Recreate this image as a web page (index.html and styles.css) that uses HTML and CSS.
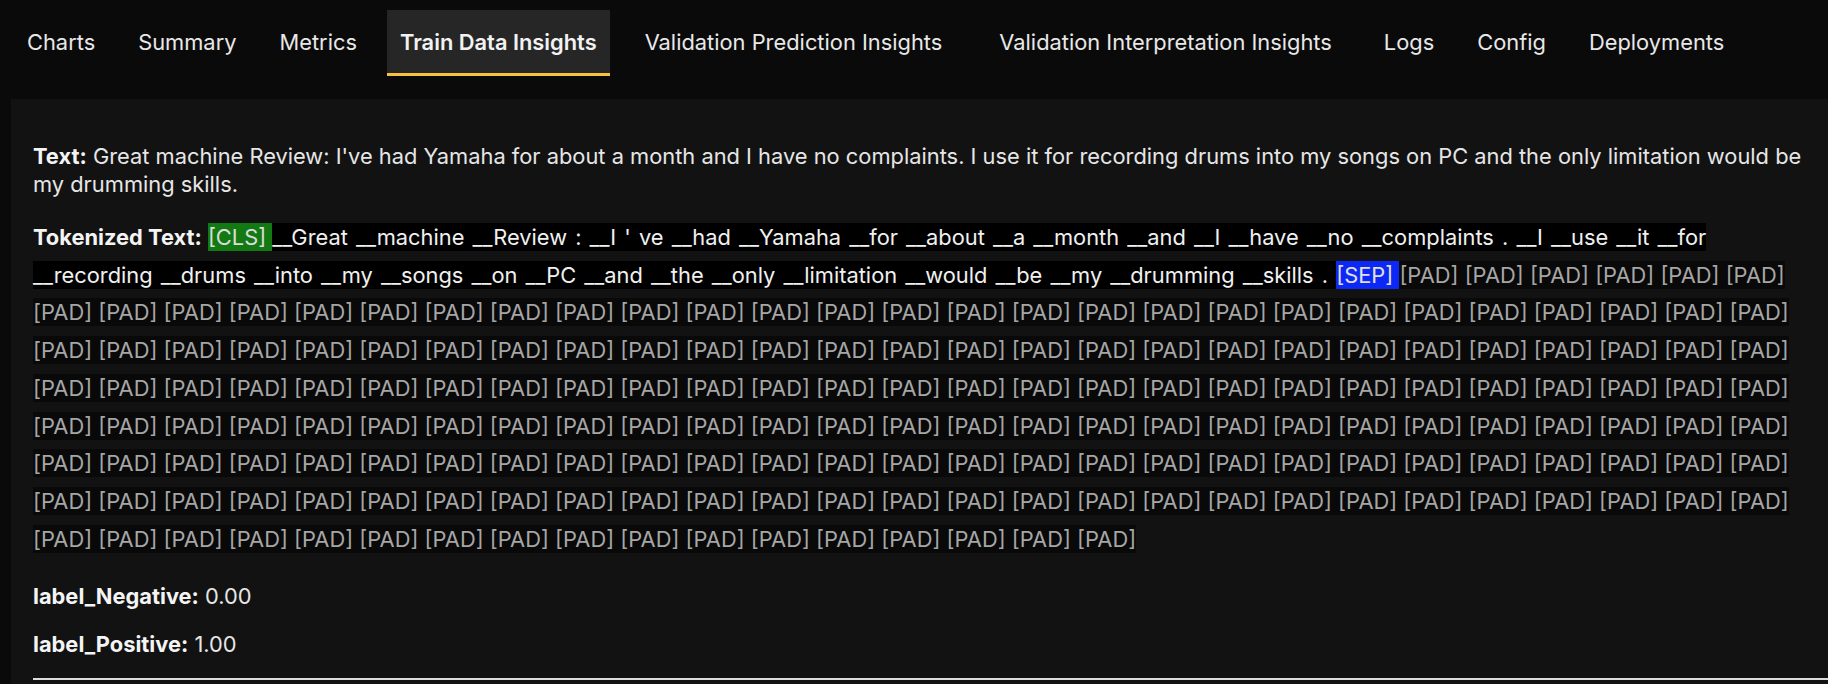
FILE: index.html
```html
<!DOCTYPE html>
<html lang="en">
<head>
<meta charset="utf-8">
<title>Train Data Insights</title>
<link rel="stylesheet" href="styles.css">
</head>
<body>
<nav class="tabs">
  <div class="tab">Charts</div>
  <div class="tab">Summary</div>
  <div class="tab">Metrics</div>
  <div class="tab active">Train Data Insights</div>
  <div class="tab tab-long">Validation Prediction Insights</div>
  <div class="tab tab-long tab-longer">Validation Interpretation Insights</div>
  <div class="tab">Logs</div>
  <div class="tab">Config</div>
  <div class="tab">Deployments</div>
</nav>
<main class="panel">
  <p class="row text-row"><b>Text:</b> Great machine Review: I've had Yamaha for about a month and I have no complaints. I use it for recording drums into my songs on PC and the only limitation would be my drumming skills.</p>
  <p class="row tokens"><b>Tokenized Text:</b> <span class="tok cls">[CLS] </span><span class="tok word">__Great __machine __Review : __I ' ve __had __Yamaha __for __about __a __month __and __I __have __no __complaints . __I __use __it __for __recording __drums __into __my __songs __on __PC __and __the __only __limitation __would __be __my __drumming __skills . </span><span class="tok sep">[SEP] </span><span class="tok pad">[PAD] [PAD] [PAD] [PAD] [PAD] [PAD] [PAD] [PAD] [PAD] [PAD]
[PAD] [PAD] [PAD] [PAD] [PAD] [PAD] [PAD] [PAD] [PAD] [PAD]
[PAD] [PAD] [PAD] [PAD] [PAD] [PAD] [PAD] [PAD] [PAD] [PAD]
[PAD] [PAD] [PAD] [PAD] [PAD] [PAD] [PAD] [PAD] [PAD] [PAD]
[PAD] [PAD] [PAD] [PAD] [PAD] [PAD] [PAD] [PAD] [PAD] [PAD]
[PAD] [PAD] [PAD] [PAD] [PAD] [PAD] [PAD] [PAD] [PAD] [PAD]
[PAD] [PAD] [PAD] [PAD] [PAD] [PAD] [PAD] [PAD] [PAD] [PAD]
[PAD] [PAD] [PAD] [PAD] [PAD] [PAD] [PAD] [PAD] [PAD] [PAD]
[PAD] [PAD] [PAD] [PAD] [PAD] [PAD] [PAD] [PAD] [PAD] [PAD]
[PAD] [PAD] [PAD] [PAD] [PAD] [PAD] [PAD] [PAD] [PAD] [PAD]
[PAD] [PAD] [PAD] [PAD] [PAD] [PAD] [PAD] [PAD] [PAD] [PAD]
[PAD] [PAD] [PAD] [PAD] [PAD] [PAD] [PAD] [PAD] [PAD] [PAD]
[PAD] [PAD] [PAD] [PAD] [PAD] [PAD] [PAD] [PAD] [PAD] [PAD]
[PAD] [PAD] [PAD] [PAD] [PAD] [PAD] [PAD] [PAD] [PAD] [PAD]
[PAD] [PAD] [PAD] [PAD] [PAD] [PAD] [PAD] [PAD] [PAD] [PAD]
[PAD] [PAD] [PAD] [PAD] [PAD] [PAD] [PAD] [PAD] [PAD] [PAD]
[PAD] [PAD] [PAD] [PAD] [PAD] [PAD] [PAD] [PAD] [PAD] [PAD]
[PAD] [PAD] [PAD] [PAD] [PAD] [PAD] [PAD] [PAD] [PAD] [PAD]
[PAD] [PAD] [PAD] [PAD] [PAD]</span></p>
  <p class="row label-row"><b>label_Negative:</b> 0.00</p>
  <p class="row label-row"><b>label_Positive:</b> 1.00</p>
  <div class="rule"></div>
</main>
</body>
</html>
```

FILE: styles.css
```css
html, body {
  margin: 0;
  height: 100%;
  overflow: hidden;
}

body {
  background: #0a0a0a;
  font-family: Inter, "Noto Sans", sans-serif;
  color: #e6e6e6;
  display: flex;
  flex-direction: column;
}

.tabs {
  display: flex;
  align-items: flex-start;
  gap: 17px;
  height: 99px;
  padding-left: 14px;
  flex: none;
}

.tab {
  margin-top: 10px;
  height: 63px;
  padding: 0 13px;
  display: flex;
  align-items: center;
  font-size: 21.85px;
  color: #e8e8e8;
  border-bottom: 3px solid transparent;
  white-space: nowrap;
}

.tab.tab-long {
  padding: 0 20px 0 18px;
}

.tab.tab-longer {
  padding: 0 22px 0 20px;
}

.tab.active {
  background: #262626;
  border-bottom-color: #f6c13c;
  font-weight: 600;
  color: #f2f2f2;
}

.panel {
  flex: 1;
  margin-left: 11px;
  background: #121212;
  padding: 43px 0 0 22px;
}

.row {
  margin: 0;
  padding-right: 14px;
  font-size: 21.85px;
  line-height: 28px;
  color: #e6e6e6;
}

.row b {
  font-weight: 700;
  color: #f4f4f4;
}

.text-row {
  margin-bottom: 21px;
}

.tokens {
  line-height: 37.7px;
  margin-bottom: 24px;
}

.tok {
  padding: 1px 0;
}

.word {
  background: #000;
  color: #f0f0f0;
  word-spacing: 2px;
}

.cls {
  background: #137a13;
  color: #dcdcdc;
}

.sep {
  background: #0c28f7;
  color: #e0e0e0;
}

.pad {
  background: #090909;
  color: #a6a6a6;
}

.label-row {
  margin-bottom: 20px;
}

.rule {
  height: 2px;
  background: #dcdcdc;
  margin-top: 0;
}
```
